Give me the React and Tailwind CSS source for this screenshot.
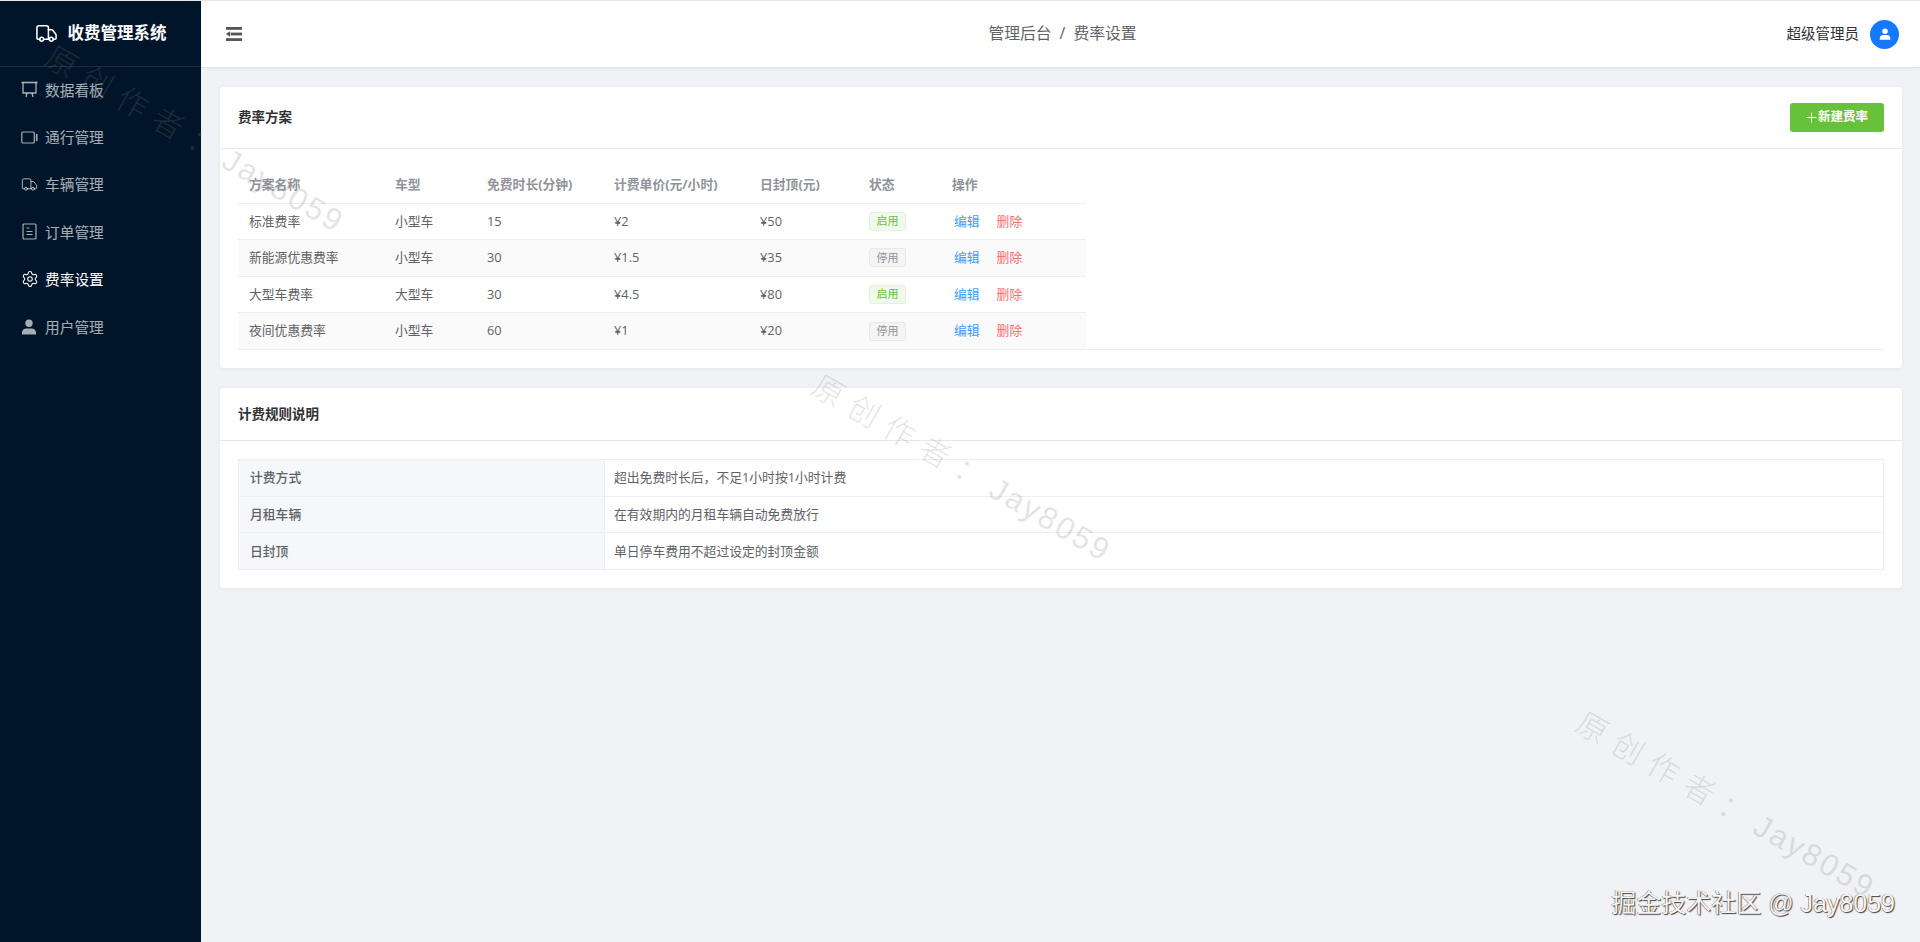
import React from "react";
import { Truck, Settings } from "lucide-react";

const BoardIcon = ({ className }) => (
  <svg viewBox="0 0 17 17" fill="none" stroke="currentColor" strokeWidth="1.3" className={className}>
    <path d="M0.5 1.5h16" strokeWidth="1.6" />
    <path d="M2 1.5v10.5h13V1.5" />
    <path d="M6 12l-1 4M11 12l1 4" />
  </svg>
);

const VideoIcon = ({ className }) => (
  <svg viewBox="0 0 17 17" fill="none" stroke="currentColor" strokeWidth="1.2" className={className}>
    <rect x="0.8" y="3" width="12.5" height="11" rx="1" />
    <path d="M15.7 5.5v6" strokeWidth="1.6" strokeLinecap="round" />
  </svg>
);

const OrderIcon = ({ className }) => (
  <svg viewBox="0 0 17 17" fill="none" stroke="currentColor" strokeWidth="1.2" className={className}>
    <rect x="2" y="1" width="13" height="15" rx="1" />
    <path d="M5.5 5h3M5.5 8.5h6M5.5 11.5h6" />
  </svg>
);

const UserSolid = ({ className }) => (
  <svg viewBox="0 0 16 16" fill="currentColor" className={className}>
    <circle cx="8" cy="4.2" r="3.7" />
    <path d="M1 15.5v-2.2C1 10.8 3.2 9.4 5.5 9.4h5c2.3 0 4.5 1.4 4.5 3.9v2.2z" />
  </svg>
);

const menu = [
  { label: "数据看板", icon: BoardIcon, size: "w-[17px] h-[17px]" },
  { label: "通行管理", icon: VideoIcon, size: "w-[17px] h-[17px]" },
  { label: "车辆管理", icon: Truck, size: "w-[17px] h-[17px]" },
  { label: "订单管理", icon: OrderIcon, size: "w-[17px] h-[17px]" },
  { label: "费率设置", icon: Settings, size: "w-[18px] h-[18px]", active: true },
  { label: "用户管理", icon: UserSolid, size: "w-[16px] h-[16px]" },
];

const plans = [
  ["标准费率", "小型车", "15", "¥2", "¥50", true],
  ["新能源优惠费率", "小型车", "30", "¥1.5", "¥35", false],
  ["大型车费率", "大型车", "30", "¥4.5", "¥80", true],
  ["夜间优惠费率", "小型车", "60", "¥1", "¥20", false],
];

const rules = [
  ["计费方式", "超出免费时长后，不足1小时按1小时计费"],
  ["月租车辆", "在有效期内的月租车辆自动免费放行"],
  ["日封顶", "单日停车费用不超过设定的封顶金额"],
];

const columns = [
  ["方案名称", "w-[146px]"],
  ["车型", "w-[92px]"],
  ["免费时长(分钟)", "w-[127px]"],
  ["计费单价(元/小时)", "w-[146px]"],
  ["日封顶(元)", "w-[109px]"],
  ["状态", "w-[83px]"],
  ["操作", "w-[145px]"],
];

const Watermark = ({ className }) => (
  <div className={`absolute rotate-[30deg] whitespace-nowrap text-[31px] leading-none font-light text-[#80808038] pointer-events-none font-['Liberation_Sans','Noto_Sans_CJK_SC',sans-serif] ${className}`}>
    <span className="tracking-[10px]">原创作者：</span>
    <span className="tracking-[2.5px]">Jay8059</span>
  </div>
);

const App = () => {
  return (
    <div className="relative flex h-screen overflow-hidden bg-[#f0f2f5] font-['Open_Sans','Noto_Sans_CJK_SC',sans-serif]">
      <aside className="w-[201px] shrink-0 bg-[#001529] border-t border-[#e5e7eb]">
        <div className="flex h-[66px] items-center justify-center gap-[10px] border-b border-white/10 text-white">
          <Truck className="w-[23px] h-[23px]" strokeWidth={1.6} />
          <span className="text-[16.5px] font-bold">收费管理系统</span>
        </div>
        <nav className="-mt-[1px]">
          {menu.map(({ label, icon: Icon, size, active }) => (
            <div
              key={label}
              className={`flex h-[47.4px] items-center pl-[21px] text-[14.7px] ${
                active ? "text-white" : "text-white/65"
              }`}>
              <span className="flex w-[24px] items-center">
                <Icon className={size} strokeWidth={1.4} />
              </span>
              <span>{label}</span>
            </div>
          ))}
        </nav>
      </aside>

      <div className="flex min-w-0 flex-1 flex-col">
        <header className="grid h-[68px] shrink-0 grid-cols-[1fr_auto_1fr] items-center border-t border-b border-[#e5e7eb] bg-white pl-[25px] pr-[21px] shadow-[0_1px_3px_rgba(0,0,0,0.04)]">
          <svg viewBox="0 0 16 14" className="w-[16px] h-[14px] fill-[#555]">
            <rect x="0" y="0" width="16" height="2.8" />
            <rect x="4.6" y="5.6" width="11.4" height="2.8" />
            <path d="M0 7 4 4.2v5.6z" />
            <rect x="0" y="11.2" width="16" height="2.8" />
          </svg>
          <div className="flex items-center gap-[8px] text-[15.8px] text-[#606266]">
            <span>管理后台</span>
            <span>/</span>
            <span>费率设置</span>
          </div>
          <div className="flex items-center justify-end gap-[11px]">
            <span className="text-[14.5px] text-[#303133]">超级管理员</span>
            <div className="flex w-[29px] h-[29px] items-center justify-center rounded-full bg-[#1677ff] text-white">
              <UserSolid className="w-[12px] h-[12px]" />
            </div>
          </div>
        </header>

        <main className="flex flex-col gap-[18px] pt-[18px] pl-[18px] pr-[17px]">
          <section className="rounded-[4px] border border-[#ebeef5] bg-white shadow-[0_1px_3px_rgba(0,0,0,0.04)]">
            <div className="flex h-[62px] items-center justify-between border-b border-[#e4e7ed] px-[18px]">
              <h2 className="text-[13.5px] font-bold text-[#303133]">费率方案</h2>
              <button className="flex w-[94px] h-[29px] items-center justify-center gap-[1px] rounded-[3px] bg-[#67c23a] text-[12.5px] font-bold text-white">
                <svg viewBox="0 0 12 12" className="w-[11px] h-[11px] stroke-white" strokeWidth="1">
                  <path d="M6 0.5v11M0.5 6h11" />
                </svg>
                新建费率
              </button>
            </div>
            <div className="p-[18px]">
              <div className="border-b border-[#ebeef5]">
                <table className="w-[848px] table-fixed text-left text-[12.8px] text-[#606266]">
                  <thead>
                    <tr className="h-[36px] border-b border-[#ebeef5] text-[#909399]">
                      {columns.map(([name, width]) => (
                        <th key={name} className={`${width} px-[11px] font-bold`}>
                          {name}
                        </th>
                      ))}
                    </tr>
                  </thead>
                  <tbody>
                    {plans.map(([name, type, free, price, cap, on], i) => (
                      <tr
                        key={name}
                        className={`h-[36.5px] border-b border-[#ebeef5] last:border-b-0 ${
                          i % 2 === 1 ? "bg-[#fafafa]" : ""
                        }`}>
                        <td className="px-[11px]">{name}</td>
                        <td className="px-[11px]">{type}</td>
                        <td className="px-[11px]">{free}</td>
                        <td className="px-[11px]">{price}</td>
                        <td className="px-[11px]">{cap}</td>
                        <td className="px-[11px]">
                          <span
                            className={`flex w-[37px] h-[19px] items-center justify-center rounded-[3px] border text-[11px] ${
                              on
                                ? "border-[#e1f3d8] bg-[#f0f9eb] text-[#67c23a]"
                                : "border-[#e9e9eb] bg-[#f4f4f5] text-[#909399]"
                            }`}>
                            {on ? "启用" : "停用"}
                          </span>
                        </td>
                        <td className="px-[11px]">
                          <div className="ml-[2px] flex gap-[17px]">
                            <span className="text-[#409eff]">编辑</span>
                            <span className="text-[#f56c6c]">删除</span>
                          </div>
                        </td>
                      </tr>
                    ))}
                  </tbody>
                </table>
              </div>
            </div>
          </section>

          <section className="rounded-[4px] border border-[#ebeef5] bg-white shadow-[0_1px_3px_rgba(0,0,0,0.04)]">
            <div className="flex h-[53px] items-center border-b border-[#e4e7ed] px-[18px]">
              <h2 className="text-[13.5px] font-bold text-[#303133]">计费规则说明</h2>
            </div>
            <div className="p-[18px]">
              <table className="w-full table-fixed text-left text-[12.8px] text-[#606266]">
                <tbody>
                  {rules.map(([name, desc]) => (
                    <tr key={name} className="h-[36.7px]">
                      <td className="w-[366px] border border-[#ebeef5] bg-[#f5f7fa] px-[11px] font-medium">
                        {name}
                      </td>
                      <td className="border border-[#ebeef5] px-[9px]">{desc}</td>
                    </tr>
                  ))}
                </tbody>
              </table>
            </div>
          </section>
        </main>
      </div>

      <Watermark className="left-[25px] top-[124px]" />
      <Watermark className="left-[792px] top-[453px]" />
      <Watermark className="left-[1556px] top-[790px]" />
      <div className="absolute right-[25px] bottom-[26px] whitespace-nowrap text-[25px] leading-none text-[#f4f4f4] [text-shadow:1px_1px_1px_#444,-0.5px_-0.5px_0.5px_#666] pointer-events-none font-['Liberation_Sans','Noto_Sans_CJK_SC',sans-serif]">
        掘金技术社区 @ Jay8059
      </div>
    </div>
  );
};

export default App;
